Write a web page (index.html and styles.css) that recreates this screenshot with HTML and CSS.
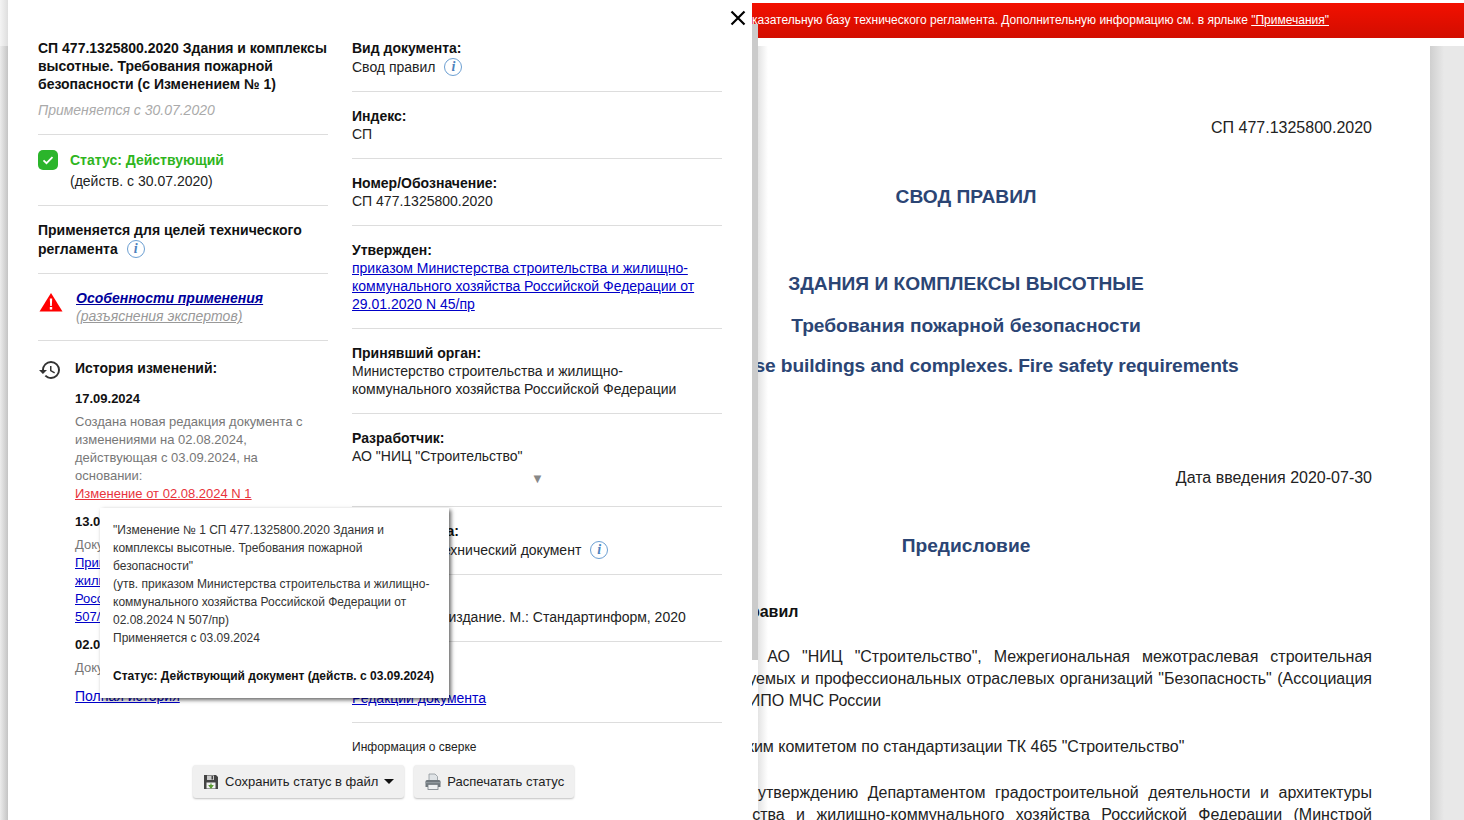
FILE: index.html
```html
<!DOCTYPE html>
<html lang="ru">
<head>
    <meta charset="UTF-8">
    <title>СП 477.1325800.2020</title>
    <link rel="stylesheet" href="styles.css">
</head>
<body>
<div class="page">
    <div class="banner">
        <span>Внимание! Документ включен в доказательную базу технического регламента. Дополнительную информацию см. в ярлыке <a href="#">"Примечания"</a></span>
    </div>

    <div class="doc-area">
        <div class="sheet">
            <p class="doc-right">СП 477.1325800.2020</p>
            <h2 class="doc-title t1">СВОД ПРАВИЛ</h2>
            <h2 class="doc-title t2">ЗДАНИЯ И КОМПЛЕКСЫ ВЫСОТНЫЕ</h2>
            <h2 class="doc-title t3">Требования пожарной безопасности</h2>
            <h2 class="doc-title t3b">High-rise buildings and complexes. Fire safety requirements</h2>
            <p class="doc-right t4">Дата введения 2020-07-30</p>
            <h2 class="doc-title t5">Предисловие</h2>
            <p class="doc-sub">Сведения о своде правил</p>
            <p class="doc-text first">1 ИСПОЛНИТЕЛИ - АО "НИЦ "Строительство", Межрегиональная межотраслевая строительная ассоциация саморегулируемых и профессиональных отраслевых организаций "Безопасность" (Ассоциация СРО Безопасность), ВНИИПО МЧС России</p>
            <p class="doc-text">2 ВНЕСЕН Техническим комитетом по стандартизации ТК 465 "Строительство"</p>
            <p class="doc-text">3 ПОДГОТОВЛЕН к утверждению Департаментом градостроительной деятельности и архитектуры Министерства строительства и жилищно-коммунального хозяйства Российской Федерации (Минстрой России)</p>
        </div>
        <div class="side"></div>
    </div>

    <div class="panel">
        <svg class="close" width="16" height="16" viewBox="0 0 16 16"><path d="M1.500 1.500l13 13M14.500 1.500l-13 13" stroke="#000" stroke-width="2.200" fill="none"/></svg>

        <div class="columns">
            <div class="col-left">
                <div class="block title-block">
                    <div class="doc-name">СП 477.1325800.2020 Здания и комплексы высотные. Требования пожарной безопасности (с Изменением № 1)</div>
                    <div class="applies">Применяется с 30.07.2020</div>
                </div>

                <div class="block status-block">
                    <svg class="status-icon" width="20" height="20" viewBox="0 0 20 20"><rect width="20" height="20" rx="5" fill="#2bb52b"/><path d="M5.500 10.300l3 2.900 6-6" stroke="#fff" stroke-width="1.800" fill="none"/></svg>
                    <div>
                        <div class="status-name">Статус: Действующий</div>
                        <div class="status-date">(действ. с 30.07.2020)</div>
                    </div>
                </div>

                <div class="block tech-block">Применяется для целей технического регламента <span class="info">i</span></div>

                <div class="block warn-block">
                    <svg class="warn-icon" width="24" height="20" viewBox="0 0 24 20"><path d="M12 1L23.500 19.500H.5z" fill="#f00"/><path d="M10.800 6.500h2.400l-.4 7.500h-1.600zM10.800 15h2.400v2.500h-2.400z" fill="#fff"/></svg>
                    <div>
                        <a class="warn-link" href="#">Особенности применения</a>
                        <a class="warn-sub" href="#">(разъяснения экспертов)</a>
                    </div>
                </div>

                <div class="history">
                    <svg class="history-icon" width="24" height="24" viewBox="0 0 24 24"><path fill="#333" d="M13 3a9 9 0 0 0-9 9H1l3.890 3.890.07.14L9 12H6c0-3.870 3.130-7 7-7s7 3.130 7 7-3.130 7-7 7c-1.930 0-3.680-.79-4.940-2.060l-1.420 1.420A8.954 8.954 0 0 0 13 21a9 9 0 0 0 0-18zm-1 5v5l4.280 2.540.72-1.210-3.500-2.080V8H12z"/></svg>
                    <div class="history-body">
                        <div class="history-title">История изменений:</div>
                        <div class="h-date">17.09.2024</div>
                        <div class="h-text">Создана новая редакция документа с изменениями на 02.08.2024, действующая с 03.09.2024, на основании:
                            <a class="h-red" href="#">Изменение от 02.08.2024 N 1</a>
                        </div>
                        <div class="h-date next">13.08.2024</div>
                        <div class="h-text">Документ вносит изменения
                            <a href="#">Приказ Министерства строительства и жилищно-коммунального хозяйства Российской Федерации от 02.08.2024 N 507/пр</a>
                        </div>
                        <div class="h-date next">02.03.2020</div>
                        <div class="h-text">Документ утвержден</div>
                        <a class="h-all" href="#">Полная история</a>
                    </div>
                </div>
            </div>

            <div class="col-right">
                <div class="row first-row">
                    <div class="label">Вид документа:</div>
                    <div class="value icon-value">Свод правил <span class="info">i</span></div>
                </div>
                <div class="row">
                    <div class="label">Индекс:</div>
                    <div class="value">СП</div>
                </div>
                <div class="row">
                    <div class="label">Номер/Обозначение:</div>
                    <div class="value">СП 477.1325800.2020</div>
                </div>
                <div class="row">
                    <div class="label">Утвержден:</div>
                    <div class="value"><a href="#">приказом Министерства строительства и жилищно-коммунального хозяйства Российской Федерации от 29.01.2020 N 45/пр</a></div>
                </div>
                <div class="row">
                    <div class="label">Принявший орган:</div>
                    <div class="value">Министерство строительства и жилищно-коммунального хозяйства Российской Федерации</div>
                </div>
                <div class="row more-row">
                    <div class="label">Разработчик:</div>
                    <div class="value">АО "НИЦ "Строительство"</div>
                    <div class="more">▼</div>
                </div>
                <div class="row">
                    <div class="label">Тип документа:</div>
                    <div class="value icon-value">Нормативно-технический документ <span class="info">i</span></div>
                </div>
                <div class="row">
                    <div class="label">Источник:</div>
                    <div class="value">Официальное издание. М.: Стандартинформ, 2020</div>
                </div>
                <div class="row links-row">
                    <div class="label">Редакции:</div>
                    <div class="value"><a href="#">Редакции документа</a></div>
                </div>
                <div class="row last-row">Информация о сверке</div>
            </div>
        </div>

        <div class="actions">
            <button class="btn">
                <svg width="16" height="16" viewBox="0 0 16 16"><path d="M1 1h12l2 2v12H1z" fill="#444"/><rect x="4" y="1.500" width="7" height="4.500" fill="#ccc"/><rect x="8.500" y="2" width="1.500" height="3.500" fill="#444"/><rect x="3.500" y="8.500" width="9" height="6" fill="#f2f2f2"/><path d="M8 9.500v2.500M6.300 11.500h3.400L8 14z" stroke="#5a9a32" stroke-width="1.200" fill="#5a9a32"/></svg>
                Сохранить статус в файл
                <span class="caret"></span>
            </button>
            <button class="btn print">
                <svg width="18" height="18" viewBox="0 0 18 18"><path d="M5 1h6l2.500 2.500V8h-8.500z" fill="#dfe3e6" stroke="#8d949a" stroke-width=".8"/><path d="M1.500 8.500q0-1.500 1.500-1.500h12q1.500 0 1.500 1.500v5.500h-15z" fill="#6f777d"/><rect x="4" y="11.500" width="10" height="5" fill="#eef0f2" stroke="#777e84" stroke-width=".8"/><rect x="1.500" y="9" width="15" height="1.300" fill="#8f979d"/></svg>
                Распечатать статус
            </button>
        </div>
    </div>

    <div class="tooltip">
        <div>"Изменение № 1 СП 477.1325800.2020 Здания и комплексы высотные. Требования пожарной безопасности"</div>
        <div>(утв. приказом Министерства строительства и жилищно-коммунального хозяйства Российской Федерации от 02.08.2024 N 507/пр)</div>
        <div>Применяется с 03.09.2024</div>
        <div class="tooltip-status">Статус: Действующий документ (действ. с 03.09.2024)</div>
    </div>
</div>
</body>
</html>
```

FILE: styles.css
```css
* {
    box-sizing: border-box;
}
html, body {
    margin: 0;
    padding: 0;
    height: 100%;
    overflow: hidden;
}
body {
    font-family: "Liberation Sans", Arial, sans-serif;
    font-size: 14px;
    background-color: white;
    color: #222;
}
a {
    color: #0000c8;
}
.page {
    position: relative;
    width: 1464px;
    height: 820px;
    overflow: hidden;
    padding-top: 3px;
}

/* red strip on top of the document */
.banner {
    height: 35px;
    display: flex;
    align-items: center;
    justify-content: flex-end;
    padding: 0 135px 2px 0;
    background: linear-gradient(#f21000, #d20d00);
    color: white;
    font-size: 12px;
    white-space: nowrap;
}
.banner a {
    color: white;
}

/* document behind the panel */
.doc-area {
    display: flex;
    margin-top: 8px;
    height: 774px;
}
.sheet {
    width: 928px;
    margin-left: 502px;
    padding: 71px 58px 0;
    background: linear-gradient(to right, white 256px, #e4e4e4 256px, white 266px);
    font-size: 16px;
    line-height: 22px;
    flex-shrink: 0;
}
.side {
    flex: 1;
    background: linear-gradient(to right, #cfcfcf, #e8e8e8 14px);
}
.sheet p, .sheet h2 {
    margin: 0;
}
.doc-right {
    text-align: right;
}
.doc-title {
    text-align: center;
    font-size: 19.2px;
    line-height: 22px;
    font-weight: bold;
    color: #2b4574;
}
.t1 { margin-top: 47px !important; }
.t2 { margin-top: 65px !important; }
.t3 { margin-top: 20px !important; }
.t3b { margin-top: 18px !important; letter-spacing: -0.1px; }
.t4 { margin-top: 90px !important; }
.t5 { margin-top: 46px !important; }
.doc-sub {
    margin-top: 44px !important;
    padding-left: 32px;
    font-weight: bold;
    color: #111;
}
.doc-text {
    margin-top: 24px !important;
    text-align: justify;
    text-indent: 34px;
}
.doc-text.first {
    margin-top: 23px !important;
}

/* status panel */
.panel {
    position: absolute;
    top: 0;
    left: 8px;
    width: 744px;
    height: 820px;
    background-color: white;
}
.panel::before {
    content: "";
    position: absolute;
    top: 0;
    bottom: 0;
    left: -8px;
    width: 8px;
    background:
        linear-gradient(to right, #f4f4f4, #dedede) 0 0 / 100% 46px no-repeat,
        linear-gradient(to right, #ececec, #c4c4c4);
}
.panel::after {
    content: "";
    position: absolute;
    top: 24px;
    left: 744px;
    width: 6px;
    height: 636px;
    background-color: #cbcbcb;
}
.close {
    position: absolute;
    top: 10px;
    left: 722px;
}
.columns {
    display: flex;
    gap: 24px;
    padding: 39px 30px 0;
}
.col-left {
    width: 290px;
    flex-shrink: 0;
}
.col-right {
    width: 370px;
    flex-shrink: 0;
}
.block {
    border-bottom: 1px solid #ddd;
    padding-bottom: 15px;
}
.doc-name {
    font-weight: bold;
    line-height: 18px;
    color: #111;
}
.applies {
    margin-top: 8px;
    line-height: 18px;
    font-style: italic;
    color: #aaa;
}
.status-block {
    display: flex;
    gap: 12px;
    padding-top: 15px;
}
.status-icon {
    flex-shrink: 0;
}
.status-name {
    font-weight: bold;
    line-height: 18px;
    color: #2fb51e;
    margin-top: 1px;
}
.status-date {
    margin-top: 3px;
    line-height: 18px;
}
.tech-block {
    padding-top: 15px;
    padding-bottom: 14px;
    font-weight: bold;
    line-height: 19px;
    color: #111;
}
.info {
    display: inline-flex;
    align-items: center;
    justify-content: center;
    width: 18px;
    height: 18px;
    margin: -2px 0 0 5px;
    border: 1.5px solid #6c9fd2;
    border-radius: 50%;
    font-family: "Liberation Serif", serif;
    font-style: italic;
    font-weight: bold;
    font-size: 14px;
    line-height: 1;
    color: #4d82bd;
    vertical-align: middle;
}
.warn-block {
    display: flex;
    gap: 13px;
    padding-top: 15px;
    line-height: 18px;
}
.warn-icon {
    flex-shrink: 0;
    margin: 3px 0 0 1px;
}
.warn-link {
    display: block;
    font-weight: bold;
    font-style: italic;
    color: #00009c;
}
.warn-sub {
    display: block;
    font-style: italic;
    color: #999;
}
.history {
    display: flex;
    gap: 13px;
    padding-top: 17px;
}
.history-icon {
    flex-shrink: 0;
}
.history-body {
    flex: 1;
    padding-top: 1px;
}
.history-title {
    font-weight: bold;
    line-height: 18px;
    color: #111;
}
.h-date {
    margin-top: 13px;
    font-size: 13px;
    font-weight: bold;
    line-height: 18px;
    color: #111;
}
.h-date.next {
    margin-top: 10px;
}
.h-text {
    margin-top: 5px;
    font-size: 13px;
    line-height: 18px;
    color: #777;
}
.h-text a {
    display: block;
}
.h-text .h-red {
    color: #e8343c;
}
.h-all {
    display: block;
    margin-top: 10px;
    line-height: 18px;
}

/* right column */
.row {
    border-bottom: 1px solid #ddd;
    padding: 15px 0;
    line-height: 18px;
}
.first-row {
    padding-top: 0;
}
.label {
    font-weight: bold;
    color: #111;
}
.icon-value {
    height: 19px;
    line-height: 20px;
}
.more-row {
    padding-bottom: 0;
}
.more {
    height: 41px;
    padding: 5px 0 0 179px;
    font-size: 13px;
    line-height: 18px;
    color: #888;
}
.links-row {
    padding-top: 29px;
}
.last-row {
    border-bottom: none;
    font-size: 12px;
}

/* buttons at the bottom of the panel */
.actions {
    position: absolute;
    top: 765px;
    left: 185px;
    display: flex;
    gap: 10px;
}
.btn {
    display: flex;
    align-items: center;
    gap: 6px;
    height: 33px;
    padding: 0 10px;
    border: none;
    border-radius: 3px;
    background-color: #f0f0f0;
    box-shadow: 0 1px 2px rgba(0,0,0,0.25);
    font-family: inherit;
    font-size: 13px;
    color: #222;
}
.btn.print {
    gap: 5px;
}
.caret {
    border-top: 5px solid #111;
    border-left: 5px solid transparent;
    border-right: 5px solid transparent;
}

/* tooltip over the change link */
.tooltip {
    position: absolute;
    top: 508px;
    left: 100px;
    width: 349px;
    height: 190px;
    padding: 13px;
    background-color: white;
    box-shadow: 2px 2px 4px rgba(0,0,0,0.6);
    font-size: 12px;
    line-height: 18px;
    color: #333;
}
.tooltip-status {
    margin-top: 20px;
    font-weight: bold;
    color: #111;
    white-space: nowrap;
}
```
